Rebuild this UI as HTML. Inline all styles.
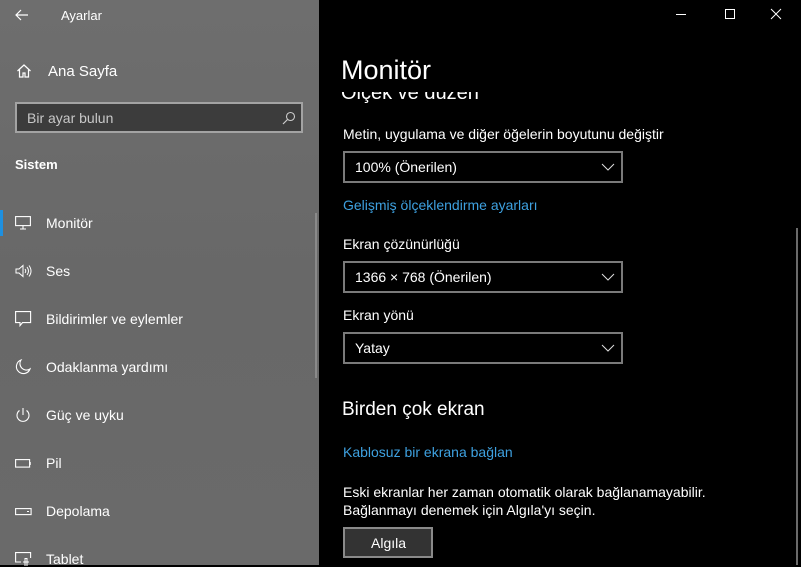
<!DOCTYPE html>
<html><head><meta charset="utf-8">
<style>
*{margin:0;padding:0;box-sizing:border-box}
html,body{width:801px;height:565px;overflow:hidden;background:#000;font-family:"Segoe UI","Liberation Sans",sans-serif;color:#fff}
.side{position:absolute;left:0;top:0;width:319px;height:565px;background:linear-gradient(180deg,#6e6e6e 0%,#686868 50%,#6a6a6a 100%)}
.abs{position:absolute;white-space:nowrap}
.t13{font-size:13px}
.t14{font-size:14px}
.t15{font-size:15px}
svg{position:absolute}
.search{position:absolute;left:15px;top:102px;width:288px;height:31px;background:#3c3c3c;border:2px solid #a3a3a3}
.right{position:absolute;left:319px;top:0;width:482px;height:565px;background:#000}
.dd{position:absolute;left:343px;width:280px;height:32px;border:2px solid #7a7a7a}
.dd span{position:absolute;left:10px;top:6px;font-size:14px}
.link{color:#3ea1e0}
</style></head><body>
<div class="side">
  <svg style="left:14px;top:7px" width="16" height="16" viewBox="0 0 16 16"><path d="M14 8H2M7 3L2 8l5 5" stroke="#fff" stroke-width="1.2" fill="none"/></svg>
  <div class="abs t13" style="left:61px;top:8px">Ayarlar</div>
  <svg style="left:16px;top:63px" width="16" height="16" viewBox="0 0 16 16"><path d="M1.5 8L8 2l6.5 6M3.5 6.5V14h3.5v-4h2v4h3.5V6.5" stroke="#fff" stroke-width="1.2" fill="none"/></svg>
  <div class="abs t15" style="left:48px;top:63px">Ana Sayfa</div>
  <div class="search"><span class="abs t14" style="left:10px;top:6px;color:#c8c8c8">Bir ayar bulun</span>
    <svg style="left:265px;top:7px" width="14" height="14" viewBox="0 0 14 14"><circle cx="8.5" cy="5.5" r="4" stroke="#ccc" fill="none" stroke-width="1.1"/><path d="M5.5 8.5L1 13" stroke="#ccc" stroke-width="1.2"/></svg></div>
  <div class="abs t13" style="left:15px;top:157px;font-weight:bold">Sistem</div>
  <div style="position:absolute;left:0;top:210px;width:3px;height:26px;background:#1e90e0"></div>
  <div style="position:absolute;left:315px;top:213px;width:2px;height:165px;background:#8a8a8a"></div>

  <svg style="left:15px;top:216px" width="16" height="14" viewBox="0 0 16 14"><rect x="0.6" y="0.6" width="14.8" height="9" stroke="#fff" fill="none" stroke-width="1.1"/><path d="M8 10v3M5 13h6" stroke="#fff" stroke-width="1.1"/></svg>
  <div class="abs t14" style="left:46px;top:215px">Monitör</div>

  <svg style="left:15px;top:264px" width="17" height="14" viewBox="0 0 17 14"><path d="M1 5h3l4-3.5v11L4 9H1z" stroke="#fff" fill="none" stroke-width="1"/><path d="M10 5q1.5 2 0 4M12 3q3 4 0 8M14 1.5q4 5.5 0 11" stroke="#fff" fill="none" stroke-width="1"/></svg>
  <div class="abs t14" style="left:46px;top:263px">Ses</div>

  <svg style="left:15px;top:311px" width="17" height="17" viewBox="0 0 17 17"><path d="M0.6 0.6h15v11H7.5l-2.5 3v-3H0.6z" stroke="#fff" fill="none" stroke-width="1.1"/></svg>
  <div class="abs t14" style="left:46px;top:311px">Bildirimler ve eylemler</div>

  <svg style="left:15px;top:359px" width="16" height="16" viewBox="0 0 16 16"><path d="M6 1a7 7 0 1 0 9 9A6.5 6.5 0 0 1 6 1z" stroke="#fff" fill="none" stroke-width="1.1"/></svg>
  <div class="abs t14" style="left:46px;top:359px">Odaklanma yardımı</div>

  <svg style="left:15px;top:407px" width="16" height="16" viewBox="0 0 16 16"><path d="M4.5 3.5a6 6 0 1 0 7 0" stroke="#fff" fill="none" stroke-width="1.1"/><path d="M8 1v7" stroke="#fff" stroke-width="1.1"/></svg>
  <div class="abs t14" style="left:46px;top:407px">Güç ve uyku</div>

  <svg style="left:15px;top:459px" width="17" height="9" viewBox="0 0 17 9"><rect x="0.6" y="0.6" width="14" height="7.5" stroke="#fff" fill="none" stroke-width="1.1"/><path d="M15 3v3" stroke="#fff" stroke-width="1.5"/></svg>
  <div class="abs t14" style="left:46px;top:455px">Pil</div>

  <svg style="left:15px;top:508px" width="17" height="8" viewBox="0 0 17 8"><rect x="0.6" y="0.6" width="15.5" height="6" stroke="#fff" fill="none" stroke-width="1.1"/><path d="M12 3.5h2" stroke="#fff"/></svg>
  <div class="abs t14" style="left:46px;top:503px">Depolama</div>

  <svg style="left:15px;top:552px" width="17" height="14" viewBox="0 0 17 14"><path d="M6 10H0.6V0.6h15V6" stroke="#fff" fill="none" stroke-width="1.1"/><path d="M10 14V6.5h2V14M8 10h6" stroke="#fff" fill="none" stroke-width="1"/></svg>
  <div class="abs t14" style="left:46px;top:551px">Tablet</div>
</div>

<div class="right">
  <svg style="left:356px;top:8px" width="12" height="12" viewBox="0 0 12 12"><path d="M1 6.5h10" stroke="#fff" stroke-width="1"/></svg>
  <svg style="left:405px;top:8px" width="12" height="12" viewBox="0 0 12 12"><rect x="1.5" y="1.5" width="9" height="9" stroke="#fff" fill="none" stroke-width="1"/></svg>
  <svg style="left:451px;top:8px" width="12" height="12" viewBox="0 0 12 12"><path d="M1 1l10 10M11 1L1 11" stroke="#fff" stroke-width="1"/></svg>
  <div style="position:absolute;left:477px;top:228px;width:2px;height:337px;background:#6a6a6a"></div>
</div>

<div class="abs" style="left:341px;top:55px;font-size:27px;font-weight:300">Monitör</div>
<div style="position:absolute;left:319px;top:92px;width:470px;height:20px;overflow:hidden">
  <div class="abs" style="left:22px;top:-10px;font-size:20px">Ölçek ve düzen</div>
</div>
<div class="abs t14" style="left:343px;top:126px">Metin, uygulama ve diğer öğelerin boyutunu değiştir</div>
<div class="dd" style="top:151px"><span>100% (Önerilen)</span><svg style="left:256px;top:10px" width="14" height="8" viewBox="0 0 14 8"><path d="M1 1l6 6 6-6" stroke="#ddd" fill="none"/></svg></div>
<div class="abs t14 link" style="left:343px;top:197px">Gelişmiş ölçeklendirme ayarları</div>
<div class="abs t14" style="left:343px;top:236px">Ekran çözünürlüğü</div>
<div class="dd" style="top:261px"><span>1366 × 768 (Önerilen)</span><svg style="left:256px;top:10px" width="14" height="8" viewBox="0 0 14 8"><path d="M1 1l6 6 6-6" stroke="#ddd" fill="none"/></svg></div>
<div class="abs t14" style="left:343px;top:307px">Ekran yönü</div>
<div class="dd" style="top:332px"><span>Yatay</span><svg style="left:256px;top:10px" width="14" height="8" viewBox="0 0 14 8"><path d="M1 1l6 6 6-6" stroke="#ddd" fill="none"/></svg></div>
<div class="abs" style="left:342px;top:399px;font-size:19px">Birden çok ekran</div>
<div class="abs t14 link" style="left:343px;top:444px">Kablosuz bir ekrana bağlan</div>
<div class="abs t14" style="left:343px;top:484px">Eski ekranlar her zaman otomatik olarak bağlanamayabilir.</div>
<div class="abs t14" style="left:343px;top:502px">Bağlanmayı denemek için Algıla'yı seçin.</div>
<div style="position:absolute;left:343px;top:527px;width:90px;height:31px;background:#333;border:2px solid #8a8a8a"><span class="abs t14" style="left:26px;top:6px">Algıla</span></div>
</body></html>
